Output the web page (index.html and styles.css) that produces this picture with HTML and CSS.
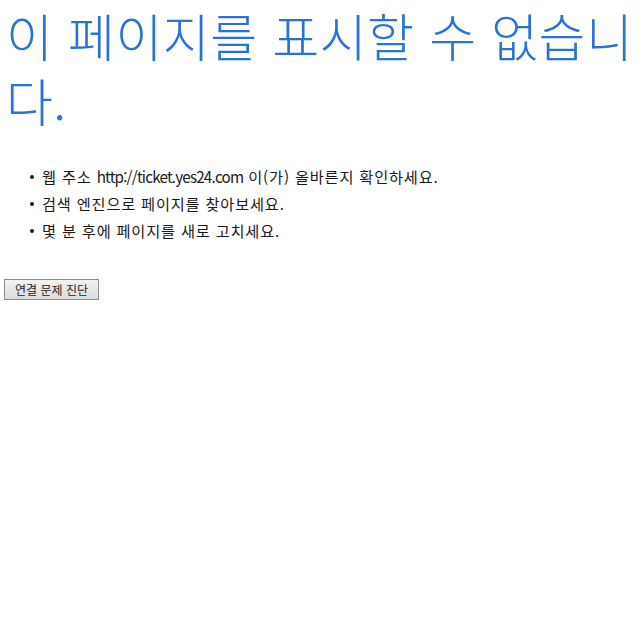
FILE: index.html
```html
<!DOCTYPE html>
<html lang="ko">
<head>
<meta charset="utf-8">
<title>이 페이지를 표시할 수 없습니다.</title>
<link rel="stylesheet" href="styles.css">
</head>
<body>
<main class="page">
  <h1 class="title">이 페이지를 표시할 수 없습니다.</h1>
  <ul class="tips">
    <li>웹 주소 <span class="url">http://ticket.yes24.com</span> 이(가) 올바른지 확인하세요.</li>
    <li>검색 엔진으로 페이지를 찾아보세요.</li>
    <li>몇 분 후에 페이지를 새로 고치세요.</li>
  </ul>
  <button class="diag" type="button">연결 문제 진단</button>
</main>
</body>
</html>
```
FILE: styles.css
```css
html, body {
  margin: 0;
  padding: 0;
  background: #ffffff;
}
.page {
  font-family: "Noto Sans CJK KR", "Noto Sans", sans-serif;
  color: #000000;
  padding: 0 4px;
}
.title {
  margin: 0;
  padding: 3px 0 0 2px;
  font-size: 51px;
  line-height: 65px;
  font-weight: 300;
  letter-spacing: 0.45px;
  color: #2a72d5;
}
.tips {
  margin: 30px 0 0 0;
  padding-left: 38px;
  font-size: 15.25px;
  line-height: 27px;
  letter-spacing: 0.8px;
  color: #1a1a1a;
  list-style: none;
}
.tips li {
  position: relative;
}
.tips li::before {
  content: "";
  position: absolute;
  left: -12px;
  top: 12px;
  width: 4px;
  height: 4px;
  border-radius: 50%;
  background: #1a1a1a;
}
.url {
  letter-spacing: -0.83px;
}
.diag {
  margin-top: 35px;
  font-family: "Noto Sans CJK KR", sans-serif;
  font-size: 12px;
  line-height: 15px;
  padding: 2px 10px;
  background: linear-gradient(#f2f2f2, #dcdcdc);
  border: 1px solid #8c8c8c;
  color: #222;
}
```
